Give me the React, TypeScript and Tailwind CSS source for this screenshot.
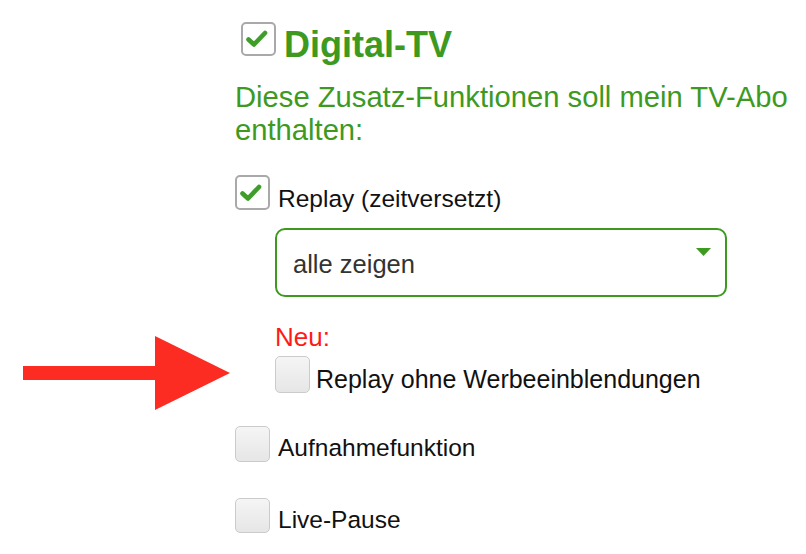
import React from 'react';

const GREEN = '#3d9a1f';

function Check() {
  return (
    <svg width="24" height="20" viewBox="0 0 24 20" className="-ml-[3px]">
      <path d="M3.5 10.5 L9 15.5 L20 4" fill="none" stroke="#3f9d2a" strokeWidth="4.6" strokeLinecap="round" strokeLinejoin="round" />
    </svg>
  );
}

function Box({ checked, h = 'h-[35px]' }: { checked?: boolean; h?: string }) {
  if (checked) {
    return (
      <div className={`w-[35px] ${h} shrink-0 rounded-[5px] border-2 border-[#a9a9a9] bg-white flex items-center justify-center`}>
        <Check />
      </div>
    );
  }
  return (
    <div className={`w-[35px] ${h} shrink-0 rounded-[5px] border border-[#cbcbcb] bg-gradient-to-b from-[#f5f5f5] to-[#e6e6e6]`} />
  );
}

function Option({ label, checked, className = '', labelTop = 'mt-[6px]', gap = 'gap-[8px]', h, size = 'text-[24.5px]' }: {
  label: string; checked?: boolean; className?: string; labelTop?: string; gap?: string; h?: string; size?: string;
}) {
  return (
    <div className={`flex items-start ${gap} ${className}`}>
      <Box checked={checked} h={h} />
      <span className={`${labelTop} ${size} leading-[35px] text-[#111] whitespace-nowrap`}>{label}</span>
    </div>
  );
}

export default function App() {
  return (
    <div className="relative w-[806px] h-[554px] bg-white overflow-hidden font-['Liberation_Sans',Arial,sans-serif]">
      <div className="flex flex-col pl-[235px]">
        <div className="flex items-start gap-[8px] mt-[22px] ml-[6px]">
          <Box checked h="h-[34px]" />
          <span className="mt-[3px] text-[36px] leading-[40px] font-bold" style={{ color: GREEN }}>Digital-TV</span>
        </div>

        <p className="mt-[16px] text-[29.2px] leading-[33px] pr-[4px]" style={{ color: GREEN }}>
          Diese Zusatz-Funktionen soll mein TV-Abo enthalten:
        </p>

        <Option className="mt-[28px]" label="Replay (zeitversetzt)" checked />

        <div className="mt-[12px] ml-[40px] w-[452px] h-[69px] rounded-[10px] border-2 border-[#3d9a1f] flex items-start justify-between pl-[16px] pr-[14px]">
          <span className="mt-[19px] text-[25.5px] leading-[30px] text-[#333]">alle zeigen</span>
          <svg width="15" height="8" viewBox="0 0 15 8" className="mt-[18px]">
            <polygon points="0,0 15,0 7.5,8" fill={GREEN} />
          </svg>
        </div>

        <div className="mt-[25px] ml-[40px] text-[26px] leading-[30px] text-[#ff1a1a]">Neu:</div>

        <Option className="mt-[4px] ml-[40px]" gap="gap-[6px]" h="h-[37px]" size="text-[25px]" label="Replay ohne Werbeeinblendungen" />

        <Option className="mt-[29px]" labelTop="mt-[4px]" h="h-[36px]" label="Aufnahmefunktion" />

        <Option className="mt-[33px]" labelTop="mt-[4px]" label="Live-Pause" />
      </div>

      <svg className="absolute left-0 top-0" width="240" height="420" viewBox="0 0 240 420">
        <rect x="23" y="366" width="134" height="14" fill="#fc2c22" />
        <polygon points="155,336 230,373 155,410" fill="#fc2c22" />
      </svg>
    </div>
  );
}
